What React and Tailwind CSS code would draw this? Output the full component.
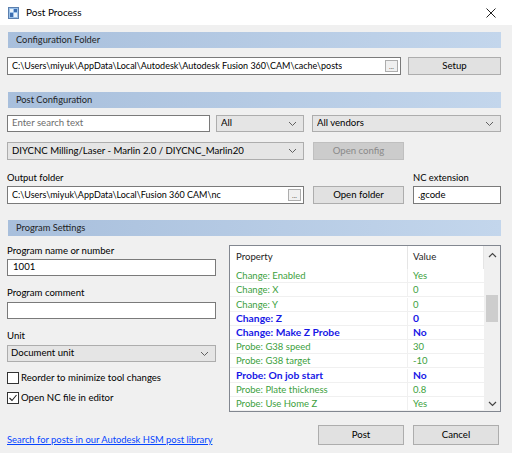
import React from "react";

const font = { fontFamily: 'Lato, "Noto Sans", sans-serif' };

function Header({ children }) {
  return (
    <div className="h-[16px] flex items-center pl-[8px] ml-[1px] bg-gradient-to-r from-[#a8bfdc] to-[#c3d6ec] text-[9.3px] text-[#1e1e1e]">
      {children}
    </div>
  );
}

function Chevron({ className = "" }) {
  return (
    <svg width="9" height="6" viewBox="0 0 9 6" className={className}>
      <path d="M1 1 L4.5 4.5 L8 1" fill="none" stroke="#606060" strokeWidth="1" />
    </svg>
  );
}

function Select({ w, children, h = "h-[17px]" }) {
  return (
    <div className={`${w} ${h} flex items-center justify-between pl-[4px] pr-[6px] bg-[#e5e5e5] border border-[#adadad] text-[9.6px] text-black`}>
      <span className="truncate">{children}</span>
      <Chevron />
    </div>
  );
}

function Button({ w, children, disabled }) {
  return (
    <div
      className={`${w} h-[18px] flex items-center justify-center border text-[9.6px] ${
        disabled ? "bg-[#cccccc] border-[#bfbfbf] text-[#8a8a8a]" : "bg-[#e1e1e1] border-[#adadad] text-black"
      }`}
    >
      {children}
    </div>
  );
}

function PathInput({ w, children }) {
  return (
    <div className={`${w} h-[18px] flex items-center justify-between bg-white border border-[#7a7a7a] pl-[4px] pr-[2px] text-[9px] text-black`}>
      <span className="truncate">{children}</span>
      <div className="shrink-0 w-[13px] h-[12px] border border-[#adadad] bg-[#f0f0f0] flex items-end justify-center text-[7px] leading-[9px] text-[#606060]">...</div>
    </div>
  );
}

const rows = [
  ["Change: Enabled", "Yes", "g"],
  ["Change: X", "0", "g"],
  ["Change: Y", "0", "g"],
  ["Change: Z", "0", "b"],
  ["Change: Make Z Probe", "No", "b"],
  ["Probe: G38 speed", "30", "g"],
  ["Probe: G38 target", "-10", "g"],
  ["Probe: On job start", "No", "b"],
  ["Probe: Plate thickness", "0.8", "g"],
  ["Probe: Use Home Z", "Yes", "g"],
];

function Checkbox({ checked }) {
  return (
    <div className="w-[12px] h-[12px] bg-white border border-[#333333] flex items-center justify-center">
      {checked && (
        <svg width="10" height="10" viewBox="0 0 10 10">
          <path d="M1.5 5 L4 7.5 L8.5 2" fill="none" stroke="#222" strokeWidth="1.1" />
        </svg>
      )}
    </div>
  );
}

export default function App() {
  return (
    <div className="w-[512px] h-[453px] bg-[#f0f0f0] flex flex-col overflow-hidden" style={font}>
      {/* title bar */}
      <div className="h-[25px] bg-white flex items-center shrink-0">
        <svg width="11" height="12" viewBox="0 0 11 12" className="ml-[8px]">
          <rect x="0.5" y="0.5" width="10" height="11" fill="#9cc2ea" stroke="#5b7fae" />
          <rect x="2" y="2" width="3" height="3" fill="#ffffff" opacity="0.8" />
          <rect x="6" y="2" width="3" height="3" fill="#3c6db0" />
          <rect x="2" y="6" width="3" height="4" fill="#3c6db0" />
          <rect x="6" y="6" width="3" height="4" fill="#ffffff" opacity="0.8" />
        </svg>
        <span className="ml-[7px] text-[10px] text-black">Post Process</span>
        <svg width="10" height="10" viewBox="0 0 10 10" className="ml-auto mr-[16px]">
          <path d="M0.5 0.5 L9.5 9.5 M9.5 0.5 L0.5 9.5" stroke="#222" strokeWidth="1" />
        </svg>
      </div>

      <div className="flex flex-col pl-[7px] pr-[11px]">
        <div className="mt-[7px]">
          <Header>Configuration Folder</Header>
        </div>
        <div className="mt-[9px] flex gap-[7px]">
          <PathInput w="w-[394px]">C:\Users\miyuk\AppData\Local\Autodesk\Autodesk Fusion 360\CAM\cache\posts</PathInput>
          <Button w="w-[93px]">Setup</Button>
        </div>

        <div className="mt-[17px]">
          <Header>Post Configuration</Header>
        </div>
        <div className="mt-[7px] flex gap-[6px]">
          <div className="w-[203px] h-[17px] bg-white border border-[#7a7a7a] flex items-center pl-[4px] text-[9.6px] text-[#6d6d6d]">
            Enter search text
          </div>
          <Select w="w-[88px]">All</Select>
          <div className="ml-[2px]">
            <Select w="w-[189px]">All vendors</Select>
          </div>
        </div>
        <div className="mt-[10px] flex gap-[9px]">
          <Select w="w-[297px]" h="h-[18px]">DIYCNC Milling/Laser - Marlin 2.0 / DIYCNC_Marlin20</Select>
          <Button w="w-[91px]" disabled>Open config</Button>
        </div>

        <div className="mt-[11px] flex gap-[9px] items-end">
          <div className="flex flex-col">
            <span className="text-[9.4px] leading-[14px] text-black">Output folder</span>
            <div className="mt-[1px]">
              <PathInput w="w-[297px]">C:\Users\miyuk\AppData\Local\Fusion 360 CAM\nc</PathInput>
            </div>
          </div>
          <Button w="w-[91px]">Open folder</Button>
          <div className="flex flex-col">
            <span className="text-[9.4px] leading-[14px] text-black">NC extension</span>
            <div className="mt-[1px] w-[88px] h-[18px] bg-white border border-[#7a7a7a] flex items-center pl-[4px] text-[9.6px] text-black">
              .gcode
            </div>
          </div>
        </div>

        <div className="mt-[16px]">
          <Header>Program Settings</Header>
        </div>

        <div className="flex">
          {/* left column */}
          <div className="w-[209px] flex flex-col">
            <span className="mt-[7px] text-[9.6px] leading-[16px] text-black">Program name or number</span>
            <div className="h-[17px] bg-white border border-[#7a7a7a] flex items-center pl-[5px] text-[9.6px] text-black">1001</div>
            <span className="mt-[9px] text-[9.6px] leading-[16px] text-black">Program comment</span>
            <div className="mt-[1px] h-[17px] bg-white border border-[#7a7a7a]"></div>
            <span className="mt-[9px] text-[9.6px] leading-[16px] text-black">Unit</span>
            <div className="mt-[1px] h-[17px] bg-[#e5e5e5] border border-[#adadad] flex items-center justify-between pl-[3px] pr-[6px] text-[9.6px] text-black">
              <span>Document unit</span>
              <Chevron />
            </div>
            <div className="mt-[9px] flex items-center gap-[2px]">
              <Checkbox />
              <span className="text-[9.6px] leading-[13px] text-black">Reorder to minimize tool changes</span>
            </div>
            <div className="mt-[7px] flex items-center gap-[2px]">
              <Checkbox checked />
              <span className="text-[9.6px] leading-[13px] text-black">Open NC file in editor</span>
            </div>
            <span className="mt-[29px] text-[9.4px] leading-[13px] text-[#0645ff] underline whitespace-nowrap">
              Search for posts in our Autodesk HSM post library
            </span>
          </div>

          {/* right column */}
          <div className="ml-[13px] flex flex-col">
            <div className="mt-[9px] w-[272px] h-[167px] bg-white border border-[#828790] flex">
              <div className="flex-1 flex flex-col">
                <div className="h-[23px] flex text-[9.6px] text-[#1e1e1e] shrink-0">
                  <div className="w-[178px] pl-[6px] flex items-center border-r border-[#e5e5e5]">Property</div>
                  <div className="flex-1 pl-[5px] flex items-center border-r border-[#e5e5e5]">Value</div>
                </div>
                {rows.map(([k, v, c]) => (
                  <div
                    key={k}
                    className={`h-[14.4px] flex items-center border-b border-[#f0f0f0] ${
                      c === "b" ? "text-[#1717e6] font-bold text-[10.3px]" : "text-[#3d9f3d] text-[9.5px]"
                    }`}
                  >
                    <div className="w-[178px] pl-[6px] leading-[13px] border-r border-[#f0f0f0]">{k}</div>
                    <div className="flex-1 pl-[5px] leading-[13px]">{v}</div>
                  </div>
                ))}
              </div>
              <div className="w-[16px] bg-[#f0f0f0] flex flex-col items-center">
                <svg width="9" height="6" viewBox="0 0 9 6" className="mt-[6px]">
                  <path d="M1 5 L4.5 1.5 L8 5" fill="none" stroke="#444" strokeWidth="1.2" />
                </svg>
                <div className="mt-[37px] w-[12px] h-[27px] bg-[#cdcdcd]"></div>
                <svg width="9" height="6" viewBox="0 0 9 6" className="mt-auto mb-[4px]">
                  <path d="M1 1 L4.5 4.5 L8 1" fill="none" stroke="#444" strokeWidth="1.2" />
                </svg>
              </div>
            </div>
            <div className="mt-[13px] flex gap-[9px] pl-[89px]">
              <div className="w-[86px] h-[20px] bg-[#e1e1e1] border border-[#adadad] flex items-center justify-center text-[9.6px] text-black">Post</div>
              <div className="w-[86px] h-[20px] bg-[#e1e1e1] border border-[#adadad] flex items-center justify-center text-[9.6px] text-black">Cancel</div>
            </div>
          </div>
        </div>
      </div>
    </div>
  );
}
